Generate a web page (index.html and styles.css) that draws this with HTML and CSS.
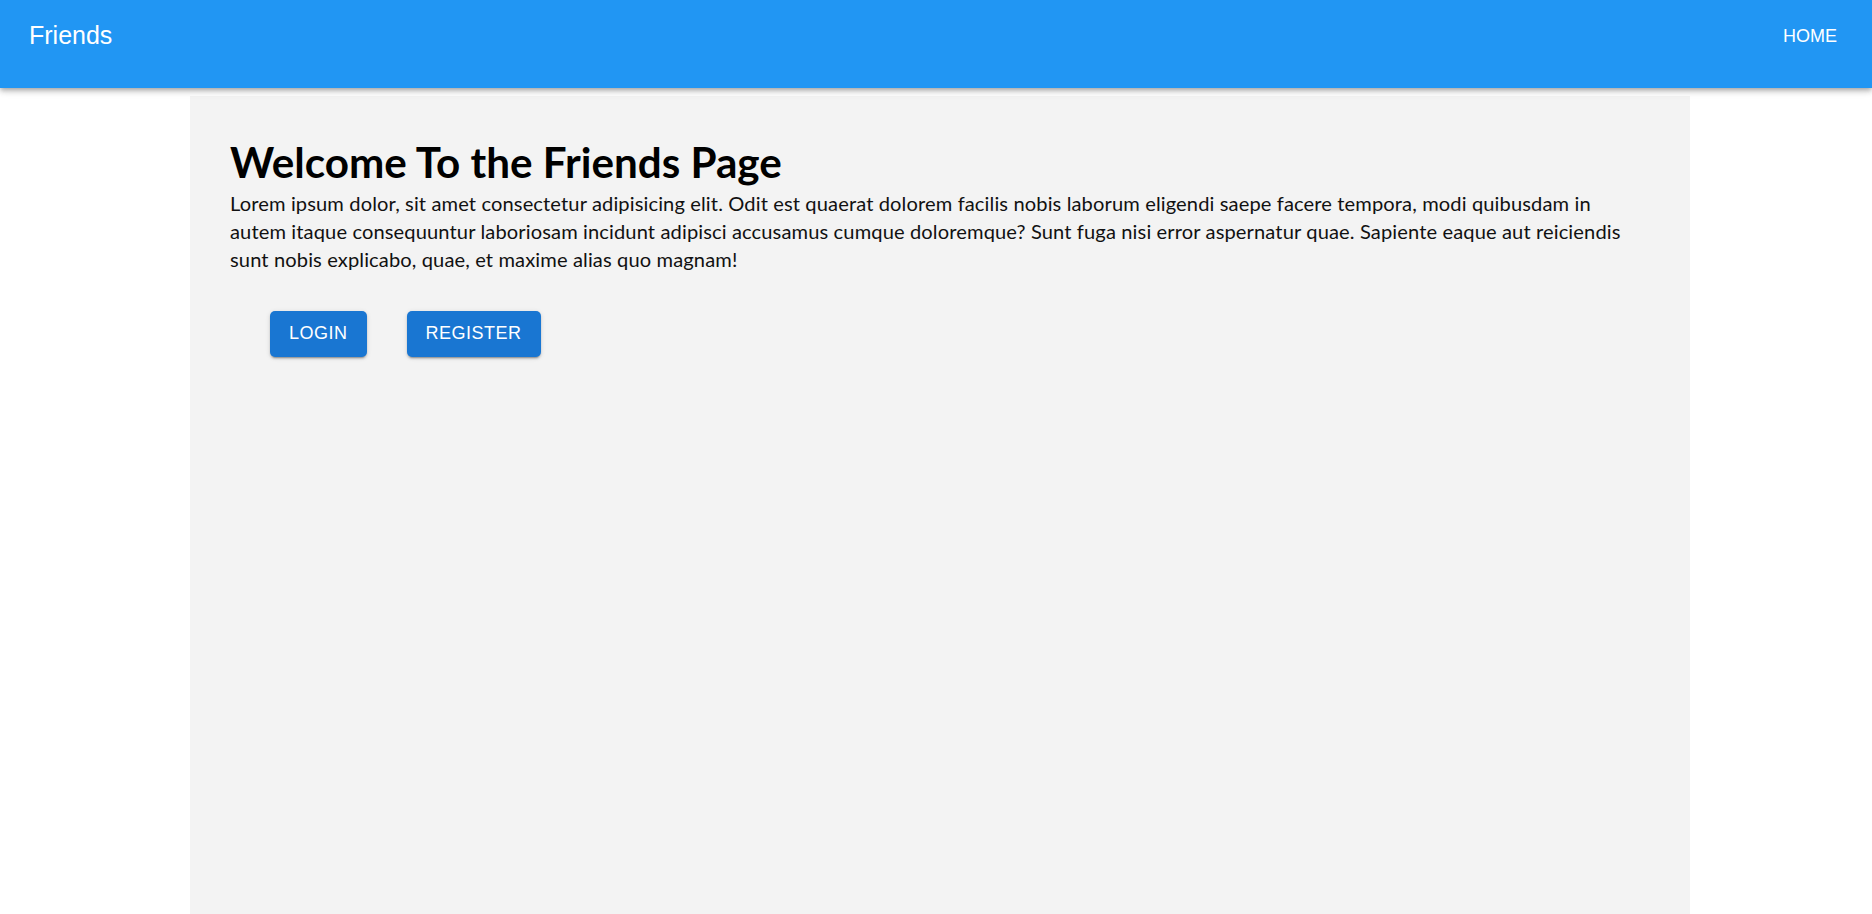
FILE: index.html
```html
<!DOCTYPE html>
<html lang="en">
<head>
<meta charset="utf-8">
<title>Friends</title>
<link rel="stylesheet" href="styles.css">
</head>
<body>
<header class="appbar">
  <div class="brand">Friends</div>
  <nav class="nav"><a class="nav-link" href="#">HOME</a></nav>
</header>
<main class="page">
  <h1 class="title">Welcome To the Friends Page</h1>
  <p class="intro">Lorem ipsum dolor, sit amet consectetur adipisicing elit. Odit est quaerat dolorem facilis nobis laborum eligendi saepe facere tempora, modi quibusdam in autem itaque consequuntur laboriosam incidunt adipisci accusamus cumque doloremque? Sunt fuga nisi error aspernatur quae. Sapiente eaque aut reiciendis sunt nobis explicabo, quae, et maxime alias quo magnam!</p>
  <div class="actions">
    <button class="btn">LOGIN</button>
    <button class="btn">REGISTER</button>
  </div>
</main>
</body>
</html>
```
FILE: styles.css
```css
html, body {
  margin: 0;
  padding: 0;
  background: #ffffff;
  overflow: hidden;
}
body {
  font-family: "Liberation Sans", Arial, sans-serif;
}
.appbar {
  height: 88px;
  background: #2196f3;
  color: #ffffff;
  display: flex;
  justify-content: space-between;
  align-items: flex-start;
  padding: 0 35px 0 29px;
  box-sizing: border-box;
  box-shadow: 0 2px 4px -1px rgba(0,0,0,0.2), 0 4px 5px 0 rgba(0,0,0,0.14), 0 1px 10px 0 rgba(0,0,0,0.12);
  position: relative;
  z-index: 1;
}
.brand {
  font-size: 25px;
  line-height: 25px;
  padding-top: 23px;
}
.nav-link {
  display: block;
  color: #ffffff;
  text-decoration: none;
  font-size: 18px;
  line-height: 18px;
  padding-top: 27px;
}
.page {
  width: 1500px;
  box-sizing: border-box;
  margin: 8px 0 0 190px;
  height: calc(100vh - 96px);
  background: #f3f3f3;
  padding: 39px 40px 0 40px;
}
.title {
  margin: 0;
  font-family: Lato, "Noto Sans", sans-serif;
  font-weight: 700;
  font-size: 42.2px;
  line-height: 54px;
  color: #000000;
}
.intro {
  margin: 0;
  font-family: Lato, "Noto Sans", sans-serif;
  font-size: 20.1px;
  letter-spacing: 0.12px;
  line-height: 28px;
  color: #111111;
  max-width: 1392px;
}
.actions {
  display: flex;
  gap: 40px;
  margin: 38px 0 0 40px;
}
.btn {
  font-family: "Liberation Sans", Arial, sans-serif;
  font-size: 18px;
  line-height: 31.5px;
  letter-spacing: 0.5px;
  color: #ffffff;
  background: #1976d2;
  border: none;
  border-radius: 5px;
  padding: 7px 19px;
  box-shadow: 0 3px 1px -2px rgba(0,0,0,0.2), 0 2px 2px 0 rgba(0,0,0,0.14), 0 1px 5px 0 rgba(0,0,0,0.12);
}
```
